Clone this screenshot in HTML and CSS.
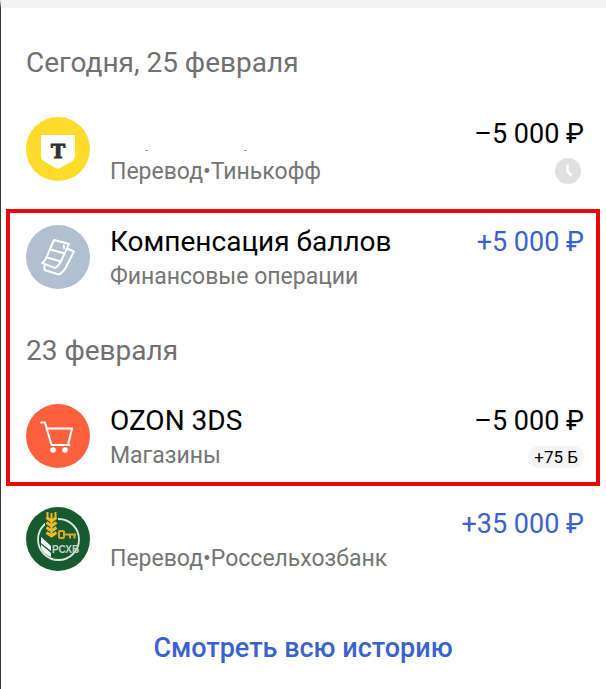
FILE: index.html
```html
<!DOCTYPE html>
<html lang="ru">
<head>
    <meta charset="UTF-8">
    <meta name="viewport" content="width=device-width, initial-scale=1.0">
    <title>История операций</title>
    <link rel="stylesheet" href="styles.css">
</head>
<body>

    <main class="history">
        <h2 class="date">Сегодня, 25 февраля</h2>

        <div class="operation pending">
            <svg class="avatar" viewBox="0 0 64 64" aria-hidden="true">
                <circle cx="32" cy="32" r="32" fill="#ffdc2b"/>
                <path d="M15 18h34v20.500c0 3-1.500 5-4 6.500L32 52l-13-7c-2.500-1.500-4-3.500-4-6.500z" fill="#fff"/>
                <text class="logo-t" x="32" y="41">Т</text>
            </svg>
            <div class="info">
                <div class="name hidden-name"><span class="trace"></span><span class="trace"></span></div>
                <div class="category">Перевод•Тинькофф</div>
            </div>
            <div class="sum">
                <div class="amount">–5 000 ₽</div>
                <svg class="clock" viewBox="0 0 26 26" aria-hidden="true">
                    <circle cx="13" cy="13" r="13" fill="#e0e0e0"/>
                    <path d="M12.500 6.500v7l4 4" fill="none" stroke="#fff" stroke-width="2.500"/>
                </svg>
            </div>
        </div>

        <section class="highlight">
            <div class="operation">
                <svg class="avatar" viewBox="0 0 64 64" aria-hidden="true">
                    <circle cx="32" cy="32" r="32" fill="#b1bfd0"/>
                    <g fill="none" stroke="#fff" stroke-width="2" stroke-linejoin="round" stroke-linecap="round">
                        <path d="M28 15l15 4-8 17c-2 4-4 6-6 7l-13-5c3-2 4-4 5-7z"/>
                        <path d="M24.500 24.500l14 4M21 32.500l14 4M38 20.500v2.500"/>
                        <path d="M42 24l6 2.500-8 15.500c-2 4-5 6.500-7 7.500L18.500 45v-4"/>
                    </g>
                </svg>
                <div class="info">
                    <div class="name">Компенсация баллов</div>
                    <div class="category">Финансовые операции</div>
                </div>
                <div class="sum">
                    <div class="amount income">+5 000 ₽</div>
                </div>
            </div>

            <h2 class="date">23 февраля</h2>

            <div class="operation">
                <svg class="avatar" viewBox="0 0 64 64" aria-hidden="true">
                    <circle cx="32" cy="32" r="32" fill="#fc603f"/>
                    <path d="M15 18.500h4l6.500 22.500h18M20.500 24.500H46L42 41" fill="none" stroke="#fff" stroke-width="2" stroke-linejoin="round" stroke-linecap="round"/>
                    <circle cx="27" cy="46" r="2.800" fill="#fff"/>
                    <circle cx="39" cy="46" r="2.800" fill="#fff"/>
                </svg>
                <div class="info">
                    <div class="name">OZON 3DS</div>
                    <div class="category">Магазины</div>
                </div>
                <div class="sum">
                    <div class="amount">–5 000 ₽</div>
                    <div class="bonus">+75 Б</div>
                </div>
            </div>
        </section>

        <div class="operation">
            <svg class="avatar" viewBox="0 0 64 64" aria-hidden="true">
                <circle cx="32" cy="32" r="32" fill="#175a2f"/>
                <circle cx="32.500" cy="32.500" r="20.500" fill="none" stroke="#dce8df" stroke-width="1.800"/>
                <path d="M19 5h13v27H19z" fill="#175a2f"/>
                <g fill="none" stroke="#f0b92c" stroke-width="3">
                    <path d="M25.500 6v24M21.500 5v7M29.500 5v7" stroke-width="2"/>
                    <path d="M20.500 10.500l5 3.500 5-3.500M20.500 15.500l5 3.500 5-3.500M20.500 20.500l5 3.500 5-3.500M20.500 25.500l5 3.500 5-3.500"/>
                </g>
                <g fill="none" stroke="#d9a92d" stroke-width="2">
                    <rect x="33" y="24" width="5" height="7" rx="1"/>
                    <path d="M38 27.500h12M44 27.500v4M48.500 27.500v4"/>
                </g>
                <path d="M15 30l10 9v5l-10-8zM15 37.500l10 8.500v4c-5-2-8-5-10-9z" fill="#fff"/>
                <text class="logo-rshb" x="26" y="46">РСХБ</text>
            </svg>
            <div class="info">
                <div class="name hidden-name"></div>
                <div class="category">Перевод•Россельхозбанк</div>
            </div>
            <div class="sum">
                <div class="amount income">+35 000 ₽</div>
            </div>
        </div>

        <a class="more" href="#">Смотреть всю историю</a>
    </main>

</body>
</html>
```
FILE: styles.css
```css
body {
    font-family: Roboto, Arial, sans-serif;
    margin: 0;
    background-color: #fff;
    color: #000;
}

.history {
    border-top: 8px solid #f3f3f3;
    border-left: 1px solid #38383a;
    padding: 38px 6px 24px 5px;
}

.date {
    margin: 0;
    padding: 0 20px;
    font-size: 28px;
    line-height: 34px;
    font-weight: 400;
    color: #707070;
}

.operation {
    display: flex;
    align-items: flex-start;
    gap: 20px;
    padding: 0 16px 0 20px;
}

.pending {
    margin-top: 37px;
}

.avatar {
    width: 64px;
    height: 64px;
    flex-shrink: 0;
}

.logo-t {
    font-family: "DejaVu Serif", serif;
    font-size: 19px;
    font-weight: 700;
    text-anchor: middle;
    fill: #2f2f31;
    stroke: #2f2f31;
    stroke-width: 1px;
}

.logo-rshb {
    font-family: "Liberation Sans", Arial, sans-serif;
    font-size: 10px;
    font-weight: 700;
    fill: #c4d4c8;
}

.info {
    flex: 1;
}

.name {
    font-size: 28px;
    line-height: 34px;
    min-height: 34px;
}

.amount {
    font-size: 27px;
    line-height: 34px;
}

.category {
    font-size: 23px;
    line-height: 36px;
    color: #757575;
}

.pending .category {
    margin-top: 3px;
}

.hidden-name {
    display: flex;
    align-items: flex-end;
    gap: 96px;
    padding-left: 35px;
    box-sizing: border-box;
}

.trace {
    width: 3px;
    height: 1px;
    background-color: #999;
}

.sum {
    display: flex;
    flex-direction: column;
    align-items: flex-end;
}

.income {
    color: #3a62ce;
}

.clock {
    width: 26px;
    height: 26px;
    margin: 7px 3px 0 0;
}

.bonus {
    margin-top: 8px;
    padding: 0 6px;
    border-radius: 11px;
    background-color: #f4f4f4;
    font-size: 17px;
    line-height: 22px;
}

.highlight {
    margin: 19px 0 21px;
    padding: 12px 0 8px;
    border: 4px solid #ec0808;
}

.highlight .operation {
    padding: 0 12px 0 16px;
}

.highlight .date {
    margin: 39px 0 36px;
    padding: 0 16px;
}

.more {
    display: block;
    margin-top: 54px;
    text-align: center;
    text-decoration: none;
    font-size: 27px;
    font-weight: 500;
    line-height: 34px;
    color: #3a62ce;
}
```
